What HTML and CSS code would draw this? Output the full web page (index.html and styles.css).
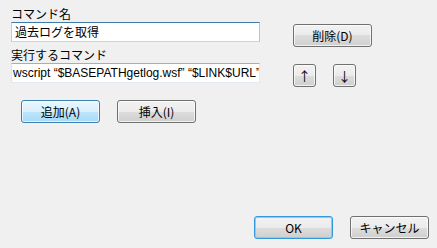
FILE: index.html
```html
<!DOCTYPE html>
<html>
<head>
    <meta charset="utf-8">
    <link rel="stylesheet" href="styles.css">
</head>
<body>
<div class="dialog">
    <div class="row">
        <div class="field">
            <div class="label">コマンド名</div>
            <div class="textbox focused">過去ログを取得</div>
        </div>
        <div class="side side-delete">
            <button class="btn btn-wide">削除(D)</button>
        </div>
    </div>
    <div class="row">
        <div class="field">
            <div class="label">実行するコマンド</div>
            <div class="textbox textbox-latin">wscript “$BASEPATHgetlog.wsf” “$LINK$URL”</div>
        </div>
        <div class="side side-arrows">
            <button class="btn btn-square">↑</button>
            <button class="btn btn-square">↓</button>
        </div>
    </div>
    <div class="actions">
        <button class="btn btn-wide btn-hot">追加(A)</button>
        <button class="btn btn-wide">挿入(I)</button>
    </div>
    <div class="footer">
        <button class="btn btn-wide btn-default">OK</button>
        <button class="btn btn-wide">キャンセル</button>
    </div>
</div>
</body>
</html>
```

FILE: styles.css
```css
body {
    margin: 0;
    background-color: #F0F0F0;
}

.dialog {
    box-sizing: border-box;
    width: 437px;
    height: 248px;
    padding: 6px 8px 9px 11px;
    display: flex;
    flex-direction: column;
    font-family: "Noto Sans CJK JP", "DejaVu Sans", sans-serif;
    font-size: 12px;
    color: #000;
}

.row {
    display: flex;
    align-items: flex-start;
    gap: 33px;
}

.field {
    width: 249px;
}

.label {
    height: 16px;
    line-height: 15px;
}

.textbox {
    box-sizing: border-box;
    height: 20px;
    line-height: 18px;
    padding-left: 3px;
    border: 1px solid #ABADB3;
    border-color: #ABADB3 #E3E9EF #E3E9EF #E2E3EA;
    background-color: #FFF;
    white-space: nowrap;
    overflow: hidden;
}

.textbox.focused {
    border-color: #3D7BAD #A4C9E3 #B7D9ED #B5CFE7;
}

.textbox-latin {
    padding-left: 1px;
    font-family: "Liberation Sans", "Noto Sans CJK JP", sans-serif;
    font-size: 12px;
}

.side {
    display: flex;
    gap: 17px;
}

.side-delete {
    margin-top: 18px;
}

.side-arrows {
    margin-top: 17px;
}

.btn {
    box-sizing: border-box;
    height: 23px;
    padding: 0;
    border: 1px solid #707070;
    border-radius: 3px;
    background: linear-gradient(#F2F2F2, #EBEBEB 50%, #DDDDDD 50%, #CFCFCF);
    box-shadow: inset 0 0 0 1px rgba(255, 255, 255, 0.7);
    font-family: "Noto Sans CJK JP", "DejaVu Sans", sans-serif;
    font-size: 12px;
    line-height: 20px;
    color: #000;
}

.btn-wide {
    width: 79px;
}

.btn-square {
    width: 23px;
    font-size: 13px;
}

.btn-hot {
    border-color: #3C7FB1;
    background: linear-gradient(#EAF6FD, #D9F0FC 50%, #BEE6FD 50%, #A7D9F5);
}

.btn-default {
    border-color: #3399DD;
    box-shadow: inset 0 0 0 1px #6FD8F8;
}

.actions {
    display: flex;
    gap: 17px;
    margin-top: 13px;
    padding-left: 10px;
}

.footer {
    margin-top: auto;
    display: flex;
    justify-content: flex-end;
    gap: 17px;
}
```
